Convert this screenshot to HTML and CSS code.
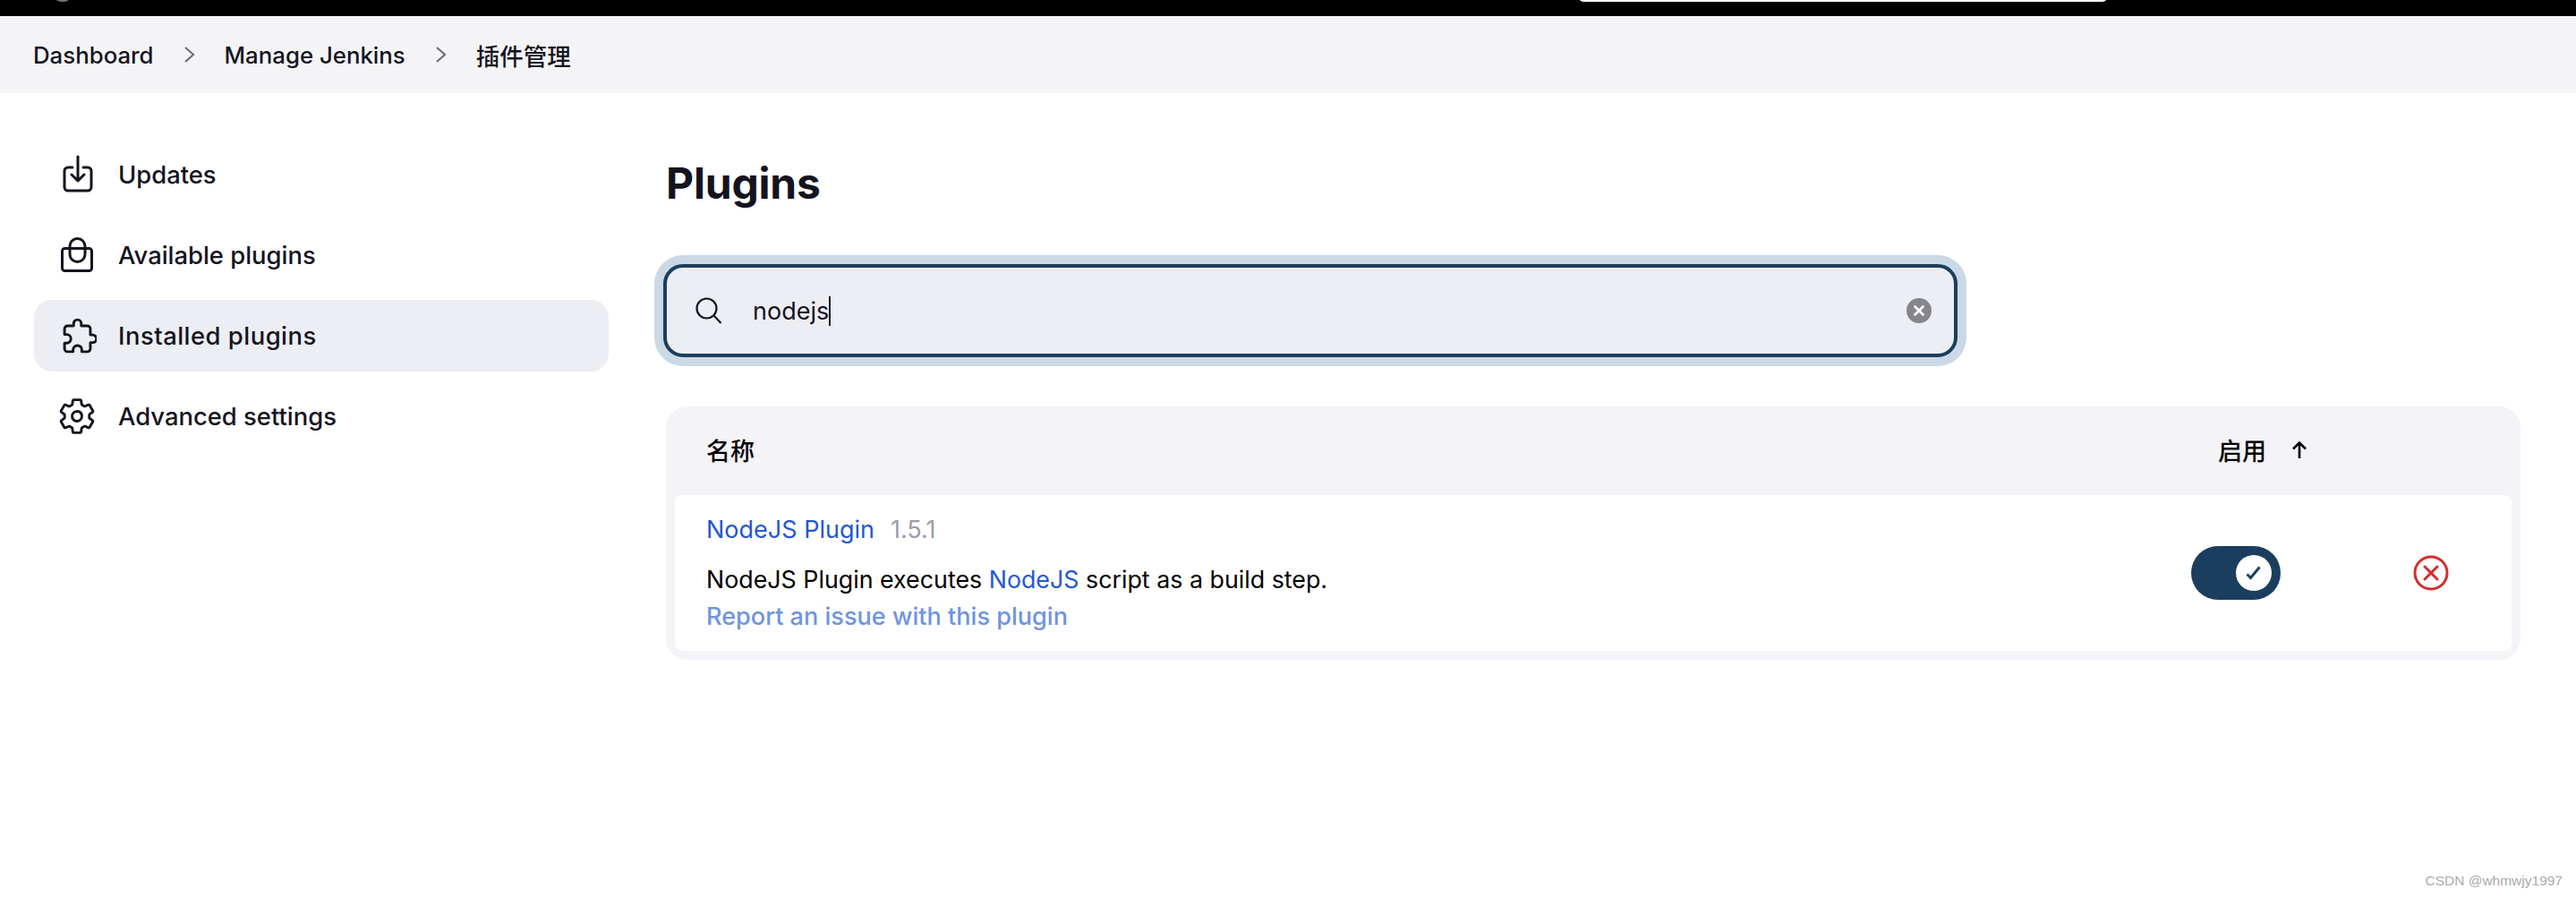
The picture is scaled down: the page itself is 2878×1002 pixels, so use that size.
FILE: index.html
```html
<!DOCTYPE html>
<html lang="zh-CN">
<head>
  <meta charset="UTF-8">
  <title>Plugins - Jenkins</title>
  <link rel="stylesheet" href="styles.css">
</head>
<body>

  <div class="top-bar">
    <span class="top-avatar"></span>
    <span class="top-search"></span>
  </div>

  <nav class="breadcrumbs">
    <a>Dashboard</a>
    <svg class="crumb-sep" viewBox="0 0 14 20"><path d="M2 2l9 8-9 8"/></svg>
    <a>Manage Jenkins</a>
    <svg class="crumb-sep" viewBox="0 0 14 20"><path d="M2 2l9 8-9 8"/></svg>
    <a class="crumb-cjk">插件管理</a>
  </nav>

  <div class="page">
    <aside class="side-nav">
      <a class="side-item">
        <svg class="side-icon" viewBox="0 0 44 44"><path d="M17 14h-5a4 4 0 0 0-4 4v18a4 4 0 0 0 4 4h22a4 4 0 0 0 4-4V18a4 4 0 0 0-4-4h-5"/><path d="M23 2v27M16 22l7 7 7-7"/></svg>
        Updates
      </a>
      <a class="side-item">
        <svg class="side-icon" viewBox="0 0 44 44"><rect x="5.5" y="14.5" width="33" height="25" rx="3"/><path d="M14 14v-2a8.5 8.5 0 0 1 17 0v2M14 15v6a8.5 8.5 0 0 0 17 0v-6"/></svg>
        Available plugins
      </a>
      <a class="side-item active">
        <svg class="side-icon icon-lg" viewBox="-46 0 512 512"><path d="M413.66 246.1H386a2 2 0 01-2-2v-77.24A38.86 38.86 0 00345.14 128H267.9a2 2 0 01-2-2V98.34c0-27.14-21.5-49.86-48.64-50.33a49.53 49.53 0 00-50.4 49.51V126a2 2 0 01-2 2H87.62A39.74 39.74 0 0048 167.62V238a2 2 0 002 2h26.91c29.37 0 53.68 25.48 54.09 54.85.42 29.87-23.51 57.15-53.29 57.15H50a2 2 0 00-2 2v70.38A39.74 39.74 0 0087.62 464H158a2 2 0 002-2v-20.93c0-30.28 24.75-56.35 55-57.06 30.1-.7 57 20.31 57 50.28V462a2 2 0 002 2h71.14A38.86 38.86 0 00384 425.14v-78a2 2 0 012-2h28.48c27.63 0 49.52-22.67 49.52-50.4s-23.2-48.64-50.34-48.64z"/></svg>
        Installed plugins
      </a>
      <a class="side-item">
        <svg class="side-icon icon-lg" viewBox="0 0 512 512"><path d="M262.29 192.31a64 64 0 1057.4 57.4 64.13 64.13 0 00-57.4-57.4zM416.39 256a154.34 154.34 0 01-1.53 20.79l45.21 35.46a10.81 10.81 0 012.45 13.75l-42.77 74a10.81 10.81 0 01-13.14 4.59l-44.9-18.08a16.11 16.11 0 00-15.17 1.75A164.48 164.48 0 01325 400.8a15.94 15.94 0 00-8.82 12.14l-6.73 47.89a11.08 11.08 0 01-10.68 9.17h-85.54a11.11 11.11 0 01-10.69-8.87l-6.72-47.82a16.07 16.07 0 00-9-12.22 155.3 155.3 0 01-21.46-12.57 16 16 0 00-15.11-1.71l-44.89 18.07a10.81 10.81 0 01-13.14-4.58l-42.77-74a10.8 10.8 0 012.45-13.75l38.21-30a16.05 16.05 0 006-14.08c-.36-4.17-.58-8.33-.58-12.5s.21-8.27.58-12.35a16 16 0 00-6.07-13.94l-38.19-30A10.81 10.81 0 0149.48 186l42.77-74a10.81 10.81 0 0113.14-4.59l44.9 18.08a16.11 16.11 0 0015.17-1.75A164.48 164.48 0 01187 111.2a15.94 15.94 0 008.82-12.14l6.73-47.89A11.08 11.08 0 01213.23 42h85.54a11.11 11.11 0 0110.69 8.87l6.72 47.82a16.07 16.07 0 009 12.22 155.3 155.3 0 0121.46 12.57 16 16 0 0015.11 1.71l44.89-18.07a10.81 10.81 0 0113.14 4.58l42.77 74a10.8 10.8 0 01-2.45 13.75l-38.21 30a16.05 16.05 0 00-6.07 14.08c.33 4.14.55 8.3.55 12.47z"/></svg>
        Advanced settings
      </a>
    </aside>

    <main class="content">
      <h1 class="page-title">Plugins</h1>

      <div class="search-box">
        <svg class="search-icon" viewBox="0 0 30 30"><circle cx="12.5" cy="12.5" r="11"/><path d="M20.5 20.5l8 8.5"/></svg>
        <span class="search-text">nodejs</span><span class="caret"></span>
        <svg class="search-clear" viewBox="0 0 28 28"><circle class="clear-bg" cx="14" cy="14" r="14"/><path class="clear-x" d="M9.5 9.5l9 9M18.5 9.5l-9 9"/></svg>
      </div>

      <section class="plugin-table">
        <div class="table-head">
          <span class="col-name">名称</span>
          <span class="col-enabled">启用
            <svg class="sort-arrow" viewBox="0 0 18 20"><path d="M9 19V2M2 8.5L9 1.5l7 7"/></svg>
          </span>
        </div>
        <div class="plugin-row">
          <div class="plugin-info">
            <div class="plugin-title">
              <a class="link">NodeJS Plugin</a>
              <span class="version">1.5.1</span>
            </div>
            <p class="plugin-desc">NodeJS Plugin executes <a class="link">NodeJS</a> script as a build step.</p>
            <a class="report-link">Report an issue with this plugin</a>
          </div>
          <div class="toggle">
            <span class="toggle-knob">
              <svg viewBox="0 0 20 20"><path d="M2.5 11.5l4 4L16.5 3.5"/></svg>
            </span>
          </div>
          <svg class="remove-icon" viewBox="0 0 40 40"><circle cx="20" cy="20" r="18"/><path d="M13 13l14 14M27 13L13 27"/></svg>
        </div>
      </section>
    </main>
  </div>

  <div class="watermark">CSDN @whmwjy1997</div>

</body>
</html>
```

FILE: styles.css
```css
* {
  box-sizing: border-box;
}

html, body {
  height: 100%;
}

body {
  margin: 0;
  font-family: Inter, "Noto Sans CJK SC", sans-serif;
  font-size: 27px;
  color: #14141f;
  background: #fff;
  overflow: hidden;
  position: relative;
}

.top-bar {
  height: 18px;
  background: #000;
  position: relative;
}

.top-avatar {
  position: absolute;
  left: 62px;
  top: -6px;
  width: 16px;
  height: 8px;
  border-radius: 50%;
  background: #777;
}

.top-search {
  position: absolute;
  left: 1764px;
  top: -8px;
  width: 590px;
  height: 10px;
  border-radius: 8px;
  background: #fff;
}

.breadcrumbs {
  height: 86px;
  background: #f4f4f6;
  display: flex;
  align-items: center;
  padding-left: 37px;
  font-size: 25.8px;
  font-weight: 450;
}

.crumb-cjk {
  font-size: 26.5px;
}

.crumb-sep {
  width: 14px;
  height: 20px;
  margin: 0 32px 0 33px;
  fill: none;
  stroke: #6e6e78;
  stroke-width: 2.2;
}

.page {
  display: grid;
  grid-template-columns: 642px 1fr;
  column-gap: 64px;
  padding: 51px 62px 0 38px;
}

.side-nav {
  display: flex;
  flex-direction: column;
  gap: 10px;
}

.side-item {
  height: 80px;
  display: flex;
  align-items: center;
  gap: 24px;
  padding-left: 26px;
  border-radius: 20px;
  font-size: 27.4px;
  font-weight: 500;
}

.side-item.active {
  background: #edeef3;
  letter-spacing: 0.5px;
}

.side-icon {
  width: 44px;
  height: 44px;
  flex: none;
  fill: none;
  stroke: #14141f;
  stroke-width: 3;
  stroke-linecap: round;
  stroke-linejoin: round;
}

.icon-lg {
  stroke-width: 34;
}

.page-title {
  margin: 18px 0 0;
  font-size: 48px;
  line-height: 64px;
  font-weight: 700;
  letter-spacing: -0.2px;
}

.search-box {
  width: 1446px;
  height: 104px;
  margin: 58px 0 0 -3px;
  border: 4px solid #1b3e5e;
  border-radius: 22px;
  background: #edeef3;
  box-shadow: 0 0 0 10px #cbd9e6;
  display: flex;
  align-items: center;
  padding: 0 25px 0 32px;
}

.search-icon {
  width: 30px;
  height: 30px;
  flex: none;
  margin-right: 34px;
  fill: none;
  stroke: #14141f;
  stroke-width: 2.2;
}

.search-text {
  font-weight: 400;
}

.caret {
  width: 2px;
  height: 33px;
  background: #14141f;
}

.search-clear {
  width: 28px;
  height: 28px;
  margin-left: auto;
}

.clear-bg {
  fill: #85858f;
}

.clear-x {
  fill: none;
  stroke: #fff;
  stroke-width: 2.6;
  stroke-linecap: round;
}

.plugin-table {
  margin-top: 55px;
  background: #f3f3f8;
  border-radius: 24px;
  padding: 0 10px 10px;
}

.table-head {
  height: 99px;
  display: flex;
  align-items: center;
  justify-content: space-between;
  font-weight: 500;
  font-size: 27px;
  color: #000;
  padding: 0 0 2px 35px;
}

.col-enabled {
  display: flex;
  align-items: center;
  gap: 28px;
  width: 328px;
}

.sort-arrow {
  width: 18px;
  height: 20px;
  fill: none;
  stroke: #000;
  stroke-width: 2.6;
}

.plugin-row {
  height: 174px;
  background: #fff;
  border-radius: 8px;
  display: flex;
  align-items: center;
  padding: 0 70px 0 35px;
  color: #000;
}

.plugin-info {
  flex: 1;
}

.plugin-title {
  display: flex;
  gap: 18px;
}

.link {
  color: #2458d0;
}

.version {
  color: #9c9cae;
}

.plugin-desc {
  margin: 22px 0 0;
  line-height: 34px;
  font-size: 26.8px;
}

.report-link {
  display: block;
  margin-top: 8px;
  line-height: 34px;
  font-size: 27.1px;
  color: #6f94e0;
  font-weight: 500;
}

.toggle {
  width: 100px;
  height: 60px;
  border-radius: 30px;
  background: #1b3e5e;
  display: flex;
  align-items: center;
  justify-content: flex-end;
  padding-right: 10px;
  margin-right: 148px;
}

.toggle-knob {
  width: 40px;
  height: 40px;
  border-radius: 50%;
  background: #fff;
  display: flex;
  align-items: center;
  justify-content: center;
}

.toggle-knob svg {
  width: 20px;
  height: 20px;
  fill: none;
  stroke: #1b3e5e;
  stroke-width: 3;
}

.remove-icon {
  width: 40px;
  height: 40px;
  fill: none;
  stroke: #d52b2b;
  stroke-width: 3;
  stroke-linecap: round;
}

.watermark {
  position: absolute;
  right: 15px;
  bottom: 9px;
  font-family: "Liberation Sans", sans-serif;
  font-size: 15.5px;
  color: #aaa;
}
```
